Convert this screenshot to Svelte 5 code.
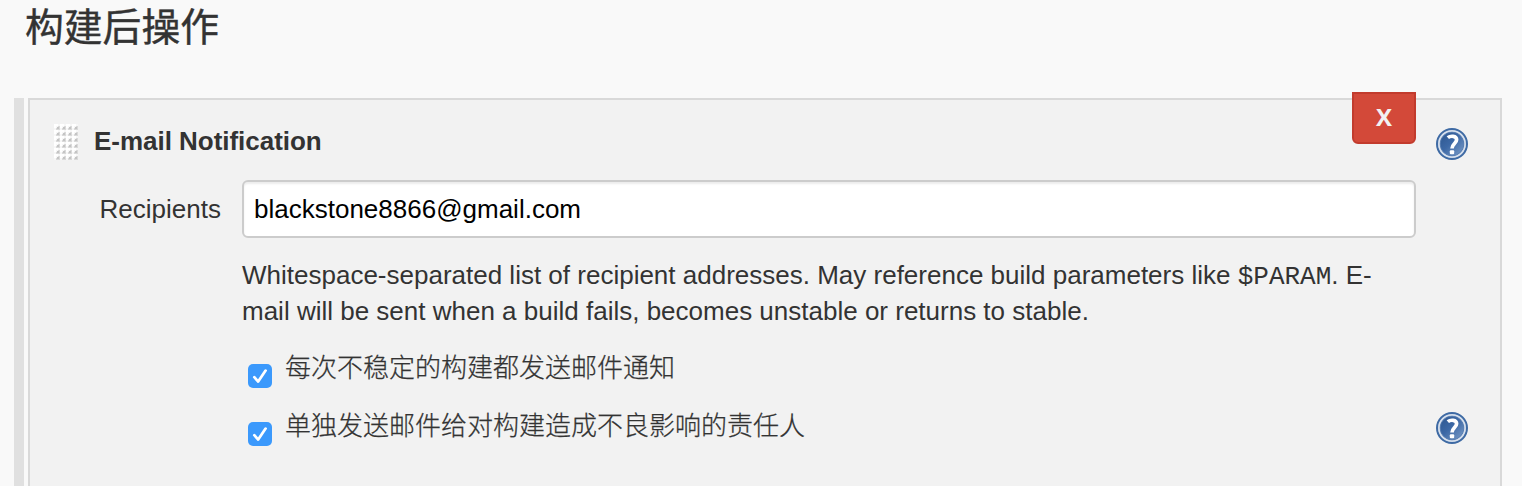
<script>
  let recipients = $state('blackstone8866@gmail.com');
  let options = $state([
    { label: '每次不稳定的构建都发送邮件通知', checked: true, help: false },
    { label: '单独发送邮件给对构建造成不良影响的责任人', checked: true, help: true }
  ]);
</script>

{#snippet helpIcon()}
  <svg class="help" viewBox="0 0 32 32" role="img" aria-label="Help">
    <defs>
      <linearGradient id="helpFill" x1="0" y1="0" x2="1" y2="1">
        <stop offset="0" stop-color="#2c568f" />
        <stop offset="0.45" stop-color="#3c68a5" />
        <stop offset="1" stop-color="#7c9dc9" />
      </linearGradient>
    </defs>
    <circle cx="16" cy="16" r="15" fill="#b3c4dc" stroke="#3e6aa4" stroke-width="2" />
    <circle cx="16" cy="16" r="11.9" fill="url(#helpFill)" stroke="#587eb2" stroke-width="1" />
    <circle cx="16" cy="16" r="13.1" fill="none" stroke="#d9e2ee" stroke-width="1.3" />
    <path d="M11.8 9.7C14.3 7.6 20.6 7.4 20.6 11.8C20.6 15.4 16 15.8 16 20.6" fill="none" stroke="#fff" stroke-width="3.7" />
    <rect x="13.8" y="22.2" width="4.4" height="4.1" rx="1" fill="#fff" />
  </svg>
{/snippet}

<main>
  <h1>构建后操作</h1>
  <div class="builder">
    <div class="rail"></div>
    <section class="panel">
      <header>
        <svg class="grip" viewBox="0 0 24 36" aria-hidden="true">
          <defs>
            <pattern id="dots" width="6" height="6" patternUnits="userSpaceOnUse">
              <rect width="6" height="6" fill="#f7f7f7" />
              <path d="M0 0H4V2H2V4H0Z" fill="#fff" />
              <path d="M4 2H6V6H2V4H4Z" fill="#dadada" />
              <rect x="3" y="3" width="2" height="2" fill="#c4c4c4" />
            </pattern>
          </defs>
          <rect width="24" height="36" fill="url(#dots)" />
        </svg>
        <h2>E-mail Notification</h2>
        <button type="button">X</button>
        <div class="aside">{@render helpIcon()}</div>
      </header>
      <div class="field">
        <label for="recipients">Recipients</label>
        <input id="recipients" type="text" bind:value={recipients} spellcheck="false" />
      </div>
      <p>Whitespace-separated list of recipient addresses. May reference build parameters like <code>$PARAM</code>. E-mail will be sent when a build fails, becomes unstable or returns to stable.</p>
      {#each options as option}
        <div class="option">
          <label>
            <input type="checkbox" bind:checked={option.checked} />
            <svg class="check" viewBox="0 0 24 24" aria-hidden="true">
              <rect width="24" height="24" rx="5" fill="#3b99fc" />
              {#if option.checked}
                <path d="M6.3 13.2L10.2 17.6L17.6 6.6" fill="none" stroke="#fff" stroke-width="2.7" stroke-linecap="round" stroke-linejoin="round" />
              {/if}
            </svg>
            <span>{option.label}</span>
          </label>
          {#if option.help}{@render helpIcon()}{/if}
        </div>
      {/each}
    </section>
  </div>
</main>

<style>
  :global(body) { background: #f9f9f9; overflow: hidden; }
  main {
    box-sizing: border-box;
    height: 486px;
    overflow: hidden;
    padding: 0 20px 0 14px;
    display: flex;
    flex-direction: column;
    background: #f9f9f9;
    color: #333;
    font: 26px/36px "Liberation Sans", "Noto Sans CJK SC", sans-serif;
  }
  h1 {
    height: 98px;
    flex: none;
    margin: 0;
    padding-left: 11px;
    font-size: 38.8px;
    font-weight: 400;
    line-height: 55px;
    -webkit-text-stroke: 0.4px #333;
  }
  .builder { flex: 1; display: flex; gap: 4px; min-height: 0; }
  .rail { width: 10px; background: #e0e0e0; }
  .panel {
    flex: 1;
    box-sizing: border-box;
    border: 2px solid #d9d9d9;
    border-bottom: 0;
    background: #f2f2f2;
    padding-left: 24px;
  }
  header { display: flex; height: 80px; align-items: flex-start; }
  .grip { width: 24px; height: 36px; margin-top: 24px; }
  h2 { flex: 1; margin: 23px 0 0 16px; font-size: 26px; line-height: 36px; letter-spacing: -0.03px; }
  button {
    box-sizing: border-box;
    width: 64px;
    height: 52px;
    margin-top: -8px;
    padding: 0 0 2px;
    border: 2px solid #c23b2d;
    border-radius: 0 0 6px 6px;
    background: #d34939;
    color: #f2f2f2;
    font: 700 24px/46px "Open Sans", sans-serif;
  }
  .aside { width: 84px; padding: 28px 0 0 20px; box-sizing: border-box; }
  .help { display: block; width: 32px; height: 32px; flex: none; }
  .field { display: flex; align-items: center; height: 58px; padding-right: 84px; }
  .field label { width: 167px; margin-right: 21px; text-align: right; }
  .field input {
    box-sizing: border-box;
    flex: 1;
    height: 58px;
    padding: 0 10px;
    border: 2px solid #ccc;
    border-radius: 6px;
    background: #fff;
    box-shadow: inset 0 2px 2px #00000013;
    color: #000;
    font: 26px "Liberation Sans", sans-serif;
    outline: 0;
  }
  p { margin: 19px 110px 0 188px; height: 91px; }
  code { font: 26px/30px "Liberation Mono", monospace; }
  .option { display: flex; justify-content: space-between; height: 58px; padding: 0 32px 0 194px; }
  .option label { display: flex; }
  .option input { appearance: none; width: 0; height: 0; margin: 0; }
  .check { width: 24px; height: 24px; margin: 16px 13px 0 0; }
  .option span { font-weight: 300; line-height: 40px; -webkit-text-stroke: 0.25px #333; }
  .option .help { margin-top: 6px; }
</style>
